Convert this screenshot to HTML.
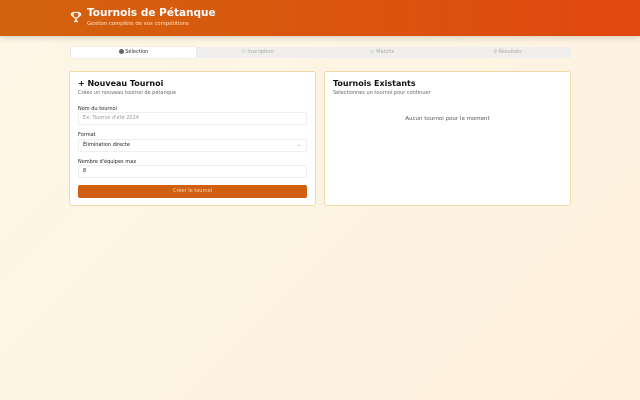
<!DOCTYPE html>
<html><head><meta charset="utf-8"><style>
*{box-sizing:border-box;margin:0;padding:0}
body{width:640px;height:400px;overflow:hidden;font-family:"DejaVu Sans","Liberation Sans",sans-serif;background:linear-gradient(135deg,#fdf7e6,#fef3e2 60%,#fef0dc);position:relative}
.hdr{height:36px;background:linear-gradient(90deg,#d2630e,#e1480f);box-shadow:0 2px 6px rgba(0,0,0,.15);position:relative;color:#fff}
.hdr h1{position:absolute;left:87px;top:7px;font-size:10.5px;font-weight:bold}
.hdr p{position:absolute;left:87px;top:21px;font-size:5.3px;color:#fde3c8}
.tabs{position:absolute;left:70px;top:47px;width:501px;height:11px;background:#f0efed;border-radius:2px}
.tab{position:absolute;top:0;height:11px;width:125px;font-size:5px;color:#aaa;text-align:center;line-height:11px}
.tab.on{background:#fff;color:#333;border-radius:2px;box-shadow:0 0 1px rgba(0,0,0,.2)}
.card{position:absolute;top:71px;height:135px;background:#fff;border:1px solid #f3d9a8;border-radius:3px}
.card h2{position:absolute;left:8px;top:7px;font-size:8px;font-weight:bold;color:#111}
.sub{position:absolute;left:8px;top:18px;font-size:5px;color:#666}
.lbl{position:absolute;left:8px;font-size:5px;color:#222}
.inp{position:absolute;left:8px;width:229px;height:13px;border:1px solid #eee;border-radius:2px;font-size:5px;line-height:11px;padding-left:4px;color:#222}
.btn{position:absolute;left:8px;top:113px;width:229px;height:13px;background:#d0600f;border-radius:2px;color:#fcd9b8;font-size:5px;text-align:center;line-height:13px}
</style></head><body>
<div class="hdr">
<svg style="position:absolute;left:70px;top:11px" width="12" height="12" viewBox="0 0 24 24" fill="none" stroke="#fff" stroke-width="2.4"><path d="M6 3h12v5a6 6 0 0 1-12 0z M6 5H3v2a3 3 0 0 0 3 3 M18 5h3v2a3 3 0 0 1-3 3 M12 14v4 M8 21h8 M10 18h4"/></svg>
<h1>Tournois de Pétanque</h1><p>Gestion complète de vos compétitions</p></div>
<div class="tabs">
<div class="tab on" style="left:1px"><span style="display:inline-block;width:5px;height:5px;border-radius:50%;background:#666;vertical-align:-1px"></span> Sélection</div>
<div class="tab" style="left:125px">⚇ Inscription</div>
<div class="tab" style="left:250px">▷ Matchs</div>
<div class="tab" style="left:375px">♀ Résultats</div>
</div>
<div class="card" style="left:69px;width:247px">
<h2>+ Nouveau Tournoi</h2><div class="sub">Créez un nouveau tournoi de pétanque</div>
<div class="lbl" style="top:34px">Nom du tournoi</div>
<div class="inp" style="top:40px;color:#999">Ex: Tournoi d'été 2024</div>
<div class="lbl" style="top:60px">Format</div>
<div class="inp" style="top:67px">Élimination directe<span style="position:absolute;right:5px;color:#888">⌄</span></div>
<div class="lbl" style="top:87px">Nombre d'équipes max</div>
<div class="inp" style="top:93px">8</div>
<div class="btn">Créer le tournoi</div>
</div>
<div class="card" style="left:324px;width:247px">
<h2>Tournois Existants</h2><div class="sub">Sélectionnez un tournoi pour continuer</div>
<div style="position:absolute;left:0;width:100%;top:44px;text-align:center;font-size:5.5px;color:#555">Aucun tournoi pour le moment</div>
</div>
</body></html>
